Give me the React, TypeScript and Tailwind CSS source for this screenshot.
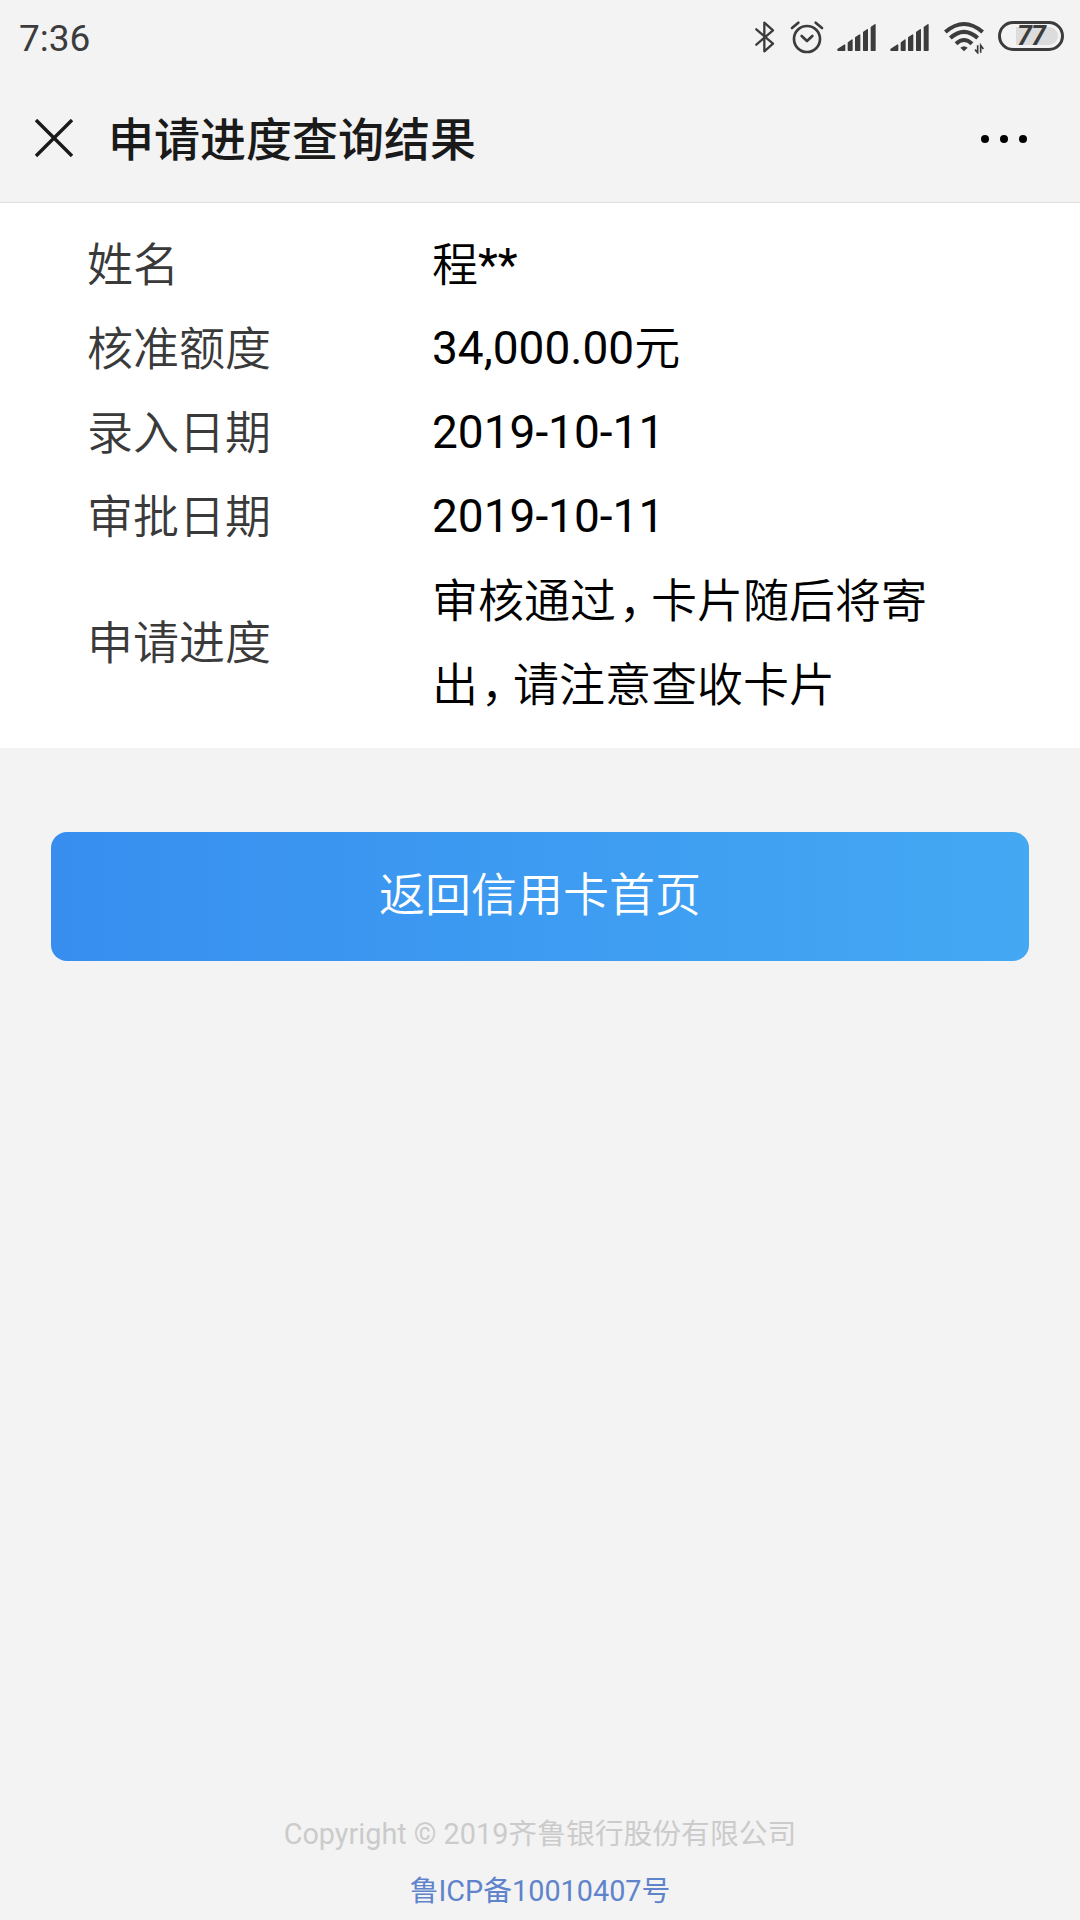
import React from 'react';

const records = [
  { label: '姓名', value: ['程**'] },
  { label: '核准额度', value: ['34,000.00元'] },
  { label: '录入日期', value: ['2019-10-11'] },
  { label: '审批日期', value: ['2019-10-11'] },
  { label: '申请进度', value: ['审核通过，卡片随后将寄', '出，请注意查收卡片'] },
];

const BluetoothIcon = () => (
  <svg width="20" height="34" viewBox="0 0 60 102" fill="none" stroke="#3c3c3c" strokeWidth="7" strokeLinejoin="round" strokeLinecap="round">
    <path d="M4 28 L54 71 L28 94 V8 L54 31 L4 74" />
  </svg>
);

const AlarmIcon = () => (
  <svg width="34" height="34" viewBox="0 0 102 102" fill="none" stroke="#3c3c3c" strokeWidth="8" strokeLinecap="round">
    <circle cx="51" cy="57" r="39" />
    <path d="M35 48 L51 63 L67 48" strokeLinejoin="round" />
    <path d="M6 24 L25 8 M77 8 L96 24" />
  </svg>
);

const SignalIcon = () => (
  <svg width="39" height="30" viewBox="0 0 117 90" fill="#3c3c3c" stroke="#3c3c3c" strokeWidth="4" strokeLinejoin="round">
    <path d="M3 82 L23 69 V85 H3 Z" />
    <path d="M34 62 L45 54 V85 H34 Z" />
    <path d="M56 47 L68 39 V85 H56 Z" />
    <path d="M80 31 L91 23 V85 H80 Z" />
    <path d="M103 16 L114 8 V85 H103 Z" />
  </svg>
);

const WifiIcon = () => (
  <svg width="40" height="34" viewBox="0 0 120 102" fill="none" stroke="#3c3c3c" strokeWidth="12">
    <path d="M4 36 Q60 -12 116 36" />
    <path d="M19 54 Q60 17 101 54" />
    <path d="M36 71 Q60 49 84 71" />
    <path d="M49 83 Q60 74 71 83 L60 94 Z" fill="#3c3c3c" stroke="none" />
    <path d="M101 76 V98 L93 89 M110 98 V76 L118 87" strokeWidth="5" />
  </svg>
);

const CloseIcon = () => (
  <svg width="38" height="38" viewBox="0 0 38 38" fill="none" stroke="#1a1a1a" strokeWidth="3.4">
    <path d="M1 1 L37 37 M37 1 L1 37" />
  </svg>
);

const StatusBar = () => (
  <div className="h-[74px] pl-[19px] pr-4 flex justify-between items-center text-[#3c3c3c]">
    <span className="mt-0.5 text-[37px] leading-none">7:36</span>
    <div className="flex items-center">
      <BluetoothIcon />
      <div className="w-[15px]" />
      <AlarmIcon />
      <div className="w-[13px]" />
      <SignalIcon />
      <div className="w-[14px]" />
      <SignalIcon />
      <div className="w-[15px]" />
      <WifiIcon />
      <div className="w-3.5" />
      <div className="w-[66px] h-[30px] mb-0.5 rounded-full border-[3px] border-[#3c3c3c] p-[3px] flex">
        <div className="flex-1 rounded-full bg-linear-to-r from-[#f3f3f3] from-22% to-[#dcdcdc] to-22% flex items-center justify-center">
          <span className="pt-px text-[27px] leading-none font-bold italic -tracking-[1px]">77</span>
        </div>
      </div>
    </div>
  </div>
);

const TitleBar = () => (
  <div className="h-[129px] pl-[35px] pr-[53px] flex items-center border-b border-[#dedede]">
    <CloseIcon />
    <h1 className="ml-[35px] pt-1 flex-1 text-[46px] leading-none font-medium text-[#1a1a1a]">申请进度查询结果</h1>
    <div className="flex gap-[11px] pt-px">
      <i className="size-2 rounded-full bg-black" />
      <i className="size-2 rounded-full bg-black" />
      <i className="size-2 rounded-full bg-black" />
    </div>
  </div>
);

// Digits use the regular weight, and the full-width comma is set tighter
const Line = ({ text }: { text: string }) => (
  <div className={/\d/.test(text) ? '-mt-0.5' : ''}>
    {text.split(/([\d*.,-]+|，)/).map((part, i) => {
      if (part === '，') {
        return <span key={i} className="pl-[3px] -tracking-[14px]">，</span>;
      }
      return i % 2 ? <span key={i} className="font-normal">{part}</span> : part;
    })}
  </div>
);

const App = () => {
  return (
    <div className="w-[1080px] h-[1920px] bg-[#f3f3f3] flex flex-col font-['Roboto','Noto_Sans_CJK_SC',sans-serif]">
      <StatusBar />
      <TitleBar />

      {/* Result details */}
      <div className="h-[545px] bg-white pl-[87px] pt-5 text-[46px] leading-[84px] font-[350]">
        {records.map((item) => (
          <div key={item.label} className="flex items-center">
            <div className="w-[345px] text-[#3a3a3a]">{item.label}</div>
            <div className="text-black whitespace-nowrap">
              {item.value.map((text) => (
                <Line key={text} text={text} />
              ))}
            </div>
          </div>
        ))}
      </div>

      <button className="mt-[84px] mx-[51px] h-[129px] pb-[3px] rounded-2xl bg-linear-to-r from-[#378eef] to-[#44a8f3] text-white text-[46px] leading-none font-[350]">
        返回信用卡首页
      </button>

      {/* Footer */}
      <div className="mt-auto text-center text-[28.8px] leading-[57px]">
        <p className="text-[#cbcbcb]">Copyright © 2019齐鲁银行股份有限公司</p>
        <p className="text-[#5f84cc]">鲁ICP备10010407号</p>
      </div>
    </div>
  );
};

export default App;
